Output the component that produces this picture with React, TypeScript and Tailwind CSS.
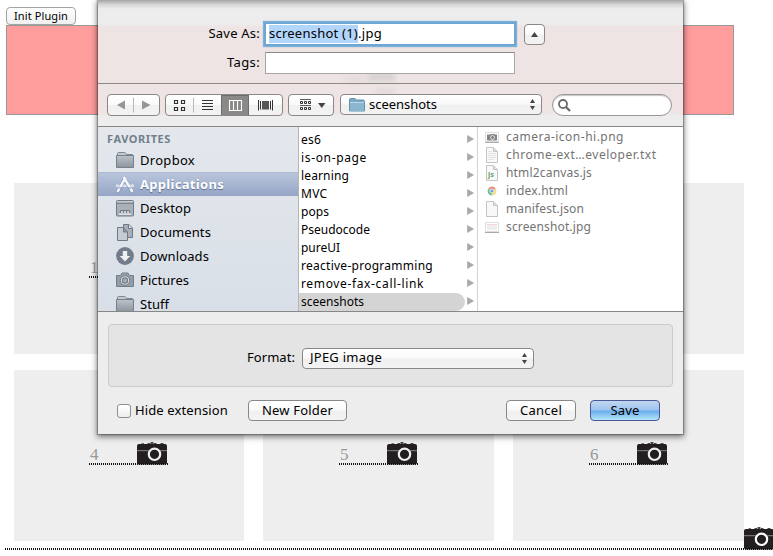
import React, { useLayoutEffect, useRef } from "react";

/** Single line of text, tracked so that it spans exactly `w` pixels. */
function Fit({ children, w, className = "" }: { children: string; w: number; className?: string }) {
  const ref = useRef<HTMLSpanElement>(null);
  useLayoutEffect(() => {
    const el = ref.current;
    if (!el) return;
    el.style.letterSpacing = "0px";
    const natural = el.getBoundingClientRect().width;
    el.style.letterSpacing = `${(w - natural) / children.length}px`;
  }, [children, w]);
  return (
    <span ref={ref} className={`inline-block shrink-0 whitespace-pre ${className}`}>
      {children}
    </span>
  );
}

const dots = "bg-[repeating-linear-gradient(90deg,#111_0_1px,transparent_1px_2px)]";
const control = "border border-[#8b8787] bg-[linear-gradient(#ffffff,#fafafa_48%,#f0f0f0_52%,#f3f3f3)] rounded-[4px]";

function Camera({ hole = "#eeeeee" }: { hole?: string }) {
  return (
    <svg width="30" height="23" viewBox="0 0 30 23" className="block shrink-0">
      <path d="M4.500 1.200H7V3H4.500zM10.500 1H13V3H10.500zM13.500 0H16.500V2H13.500zM17 1H19.500V3H17zM23.500 1H26.500V3H23.500z" fill="#4a4546" />
      <rect x="0" y="2" width="30" height="20.500" rx="2" fill="#231f20" />
      <path d="M0 8.700H30" stroke="#8a8687" strokeWidth="1" />
      <circle cx="17.500" cy="12.300" r="5.700" fill="#231f20" stroke={hole} strokeWidth="2.200" />
    </svg>
  );
}

function Card({ n, className = "" }: { n?: number; className?: string }) {
  return (
    <div className={`flex h-[171px] justify-start bg-[#eeeeee] ${className}`}>
      {n !== undefined && (
        <div className="mt-[72px] h-[23px] w-[79px]">
          <div className="flex h-[21px] justify-between pr-px font-['Liberation_Serif',serif] text-[17px] leading-[26px] text-[#999]">
            <span className="pl-px">{n}</span>
            <Camera />
          </div>
          <div className={`relative h-[2px] ${dots}`} />
        </div>
      )}
    </div>
  );
}

function FolderIcon() {
  return (
    <svg width="18" height="16" viewBox="0 0 18 16">
      <defs>
        <linearGradient id="fold" x1="0" y1="0" x2="0" y2="1">
          <stop offset="0" stopColor="#bec3c9" />
          <stop offset="1" stopColor="#8c949e" />
        </linearGradient>
      </defs>
      <path d="M1.500 3.500V1.500Q1.500.5 2.500.5H8.500Q9.500.5 9.800 1.500L10.200 2.500H16.500V3.500" fill="#c6cad0" stroke="#7c8692" />
      <path d="M.5 3.500H17.500V15.500H.5z" fill="url(#fold)" stroke="#77818d" />
    </svg>
  );
}

function AppsIcon() {
  return (
    <svg width="18" height="18" viewBox="0 0 18 18" fill="none">
      <path d="M0 8.500H4L3.500 11H0zM14 8.500H18V11H14.500zM6 8.500H11L11.700 11H5.500z" fill="#dce3ee" />
      <path d="M1.500 16.500L9 2M7.300.8L16.500 16.500" stroke="#63739a" strokeWidth="3.600" opacity=".45" />
      <path d="M1.500 16L9.500 1.500M7.500.8L16.500 16" stroke="#f5f7fb" strokeWidth="2.500" />
      <path d="M3 12H6M12 12H15" stroke="#7d8db0" />
    </svg>
  );
}

function DesktopIcon() {
  return (
    <svg width="18" height="17" viewBox="0 0 18 17">
      <rect x=".5" y=".5" width="17" height="15.500" rx="1" fill="#aab0b8" stroke="#717b87" />
      <path d="M1 3.500H17" stroke="#7b8590" />
      <path d="M1 1.500H17" stroke="#c5cad0" />
      <path d="M3 14L4.500 10H13.500L15 14z" fill="#707a86" />
      <path d="M3 14H15M5 12H7M8 12H10M11 12H13" stroke="#edf0f4" strokeWidth="1.400" />
    </svg>
  );
}

function DocsIcon() {
  return (
    <svg width="18" height="18" viewBox="0 0 18 18" stroke="#707a86">
      <path d="M7.500 1.500H13L16.500 5V14.500H7.500z" fill="#a8afb8" />
      <path d="M12.500 1.500V5.500H16.500" fill="#d9dee4" />
      <path d="M1.500 4.500H7.500L11.500 9V17.500H1.500z" fill="#c7ccd3" />
      <path d="M7.500 4.500V9H11.500" fill="#8a939e" />
    </svg>
  );
}

function DownIcon() {
  return (
    <svg width="18" height="18" viewBox="0 0 18 18">
      <circle cx="9" cy="9" r="8.900" fill="#737c89" />
      <path d="M6.800 4H11.200V9H14.200L9 14.500L3.800 9H6.800z" fill="#edf0f4" />
    </svg>
  );
}

function PicturesIcon() {
  return (
    <svg width="18" height="16" viewBox="0 0 18 16">
      <path d="M.5 3.500H4.500L6 1H12L13.500 3.500H17.500V14.500H.5z" fill="#949ca6" stroke="#737d89" />
      <circle cx="9" cy="8.500" r="4.700" fill="#dce0e6" stroke="#737d89" />
      <circle cx="9" cy="8.500" r="2.600" fill="#a8b0b9" stroke="#737d89" strokeWidth="1.200" />
    </svg>
  );
}

const favorites = [
  { name: "Dropbox", w: 55, icon: <FolderIcon /> },
  { name: "Applications", w: 84, icon: <AppsIcon />, on: true },
  { name: "Desktop", w: 51, icon: <DesktopIcon /> },
  { name: "Documents", w: 71, icon: <DocsIcon /> },
  { name: "Downloads", w: 69, icon: <DownIcon /> },
  { name: "Pictures", w: 49, icon: <PicturesIcon /> },
  { name: "Stuff", w: 29, icon: <FolderIcon /> },
];

const folders: [string, number][] = [
  ["es6", 20],
  ["is-on-page", 66],
  ["learning", 48],
  ["MVC", 26.5],
  ["pops", 28],
  ["Pseudocode", 69],
  ["pureUI", 39],
  ["reactive-programming", 132],
  ["remove-fax-call-link", 123],
  ["sceenshots", 63],
];

function FileIcon({ kind }: { kind: string }) {
  if (kind === "camera")
    return (
      <svg width="14" height="14" viewBox="0 0 14 14">
        <path d="M.5 2.500H13.500V11.500H.5z" fill="#fff" stroke="#ddd" />
        <path d="M0 12.500H14" stroke="#aaa" />
        <path d="M2 4.500H5L6 4H9.500L10 4.500H12V10.500H2z" fill="#858585" />
        <circle cx="7.500" cy="7.500" r="1.900" fill="#777" stroke="#eee" />
      </svg>
    );
  if (kind === "chrome")
    return (
      <svg width="14" height="14" viewBox="0 0 14 14">
        <path d="M7 7L3.200 4.800A4.400 4.400 0 0 1 10.800 4.800z" fill="#ec8a80" />
        <path d="M7 7V11.400A4.400 4.400 0 0 1 3.200 4.800z" fill="#72c295" />
        <path d="M7 7L10.800 4.800A4.400 4.400 0 0 1 7 11.400z" fill="#f8dc7c" />
        <circle cx="7" cy="7" r="2" fill="#75a5df" stroke="#fff" strokeWidth=".7" />
      </svg>
    );
  if (kind === "image")
    return (
      <svg width="14" height="14" viewBox="0 0 14 14">
        <path d="M.5 2.500H13.500V11.500H.5z" fill="#fff" stroke="#ddd" />
        <path d="M0 12.500H14" stroke="#aaa" />
        <path d="M2 4H12V10H2z" fill="#eeeeee" />
        <path d="M2 4.500H12" stroke="#f3d6d6" />
      </svg>
    );
  return (
    <svg width="14" height="16" viewBox="0 0 14 16">
      <path d="M1.500.5H8.500L12.500 4.500V15.500H1.500z" fill="#f8f8f8" stroke="#c4c4c4" />
      <path d="M8.500.5V4.500H12.500" fill="#ddd" stroke="#c4c4c4" />
      {kind === "text" && <path d="M3 4.500H7M3 6.500H11M3 8.500H11M3 10.500H11M3 12.500H9" stroke="#e4e4e4" />}
      {kind === "js" && (
        <text x="3" y="12" fontSize="7.500" fontWeight="bold" fontFamily="Noto Sans" fill="#6aa57a">
          js
        </text>
      )}
    </svg>
  );
}

const files: [string, number, string][] = [
  ["camera-icon-hi.png", 118, "camera"],
  ["chrome-ext…eveloper.txt", 150.5, "text"],
  ["html2canvas.js", 86, "js"],
  ["index.html", 62, "chrome"],
  ["manifest.json", 78, "blank"],
  ["screenshot.jpg", 85, "image"],
];

function UpDown() {
  return (
    <svg width="5" height="11" viewBox="0 0 5 11" fill="#444">
      <path d="M2.500 0L5 4H0zM2.500 11L5 7H0z" />
    </svg>
  );
}

function Toolbar() {
  return (
    <div className="flex h-[42px] items-start pl-[9px] pt-[10px]">
      <div className={`flex h-[22px] w-[53px] items-center ${control}`}>
        <svg width="51" height="20" viewBox="0 0 51 20">
          <path d="M17 5.500V14.500L9 10zM34 5.500V14.500L42.500 10z" fill="#979494" />
          <path d="M25.500 2.500V17.500" stroke="#bbb7b7" />
        </svg>
      </div>
      <div className={`ml-[5px] flex h-[22px] w-[118px] overflow-hidden ${control}`}>
        <svg width="116" height="20" viewBox="0 0 116 20" fill="none" stroke="#333">
          <path d="M8.500 5.500h3v3h-3zM15.500 5.500h3v3h-3zM8.500 12.500h3v3h-3zM15.500 12.500h3v3h-3z" strokeWidth="1.200" />
          <path d="M27.500 2.500V17.500" stroke="#bbb7b7" />
          <path d="M36 5.500H47M36 8.500H47M36 11.500H47M36 14.500H47" strokeWidth="1.200" />
          <rect x="55" y="0" width="28" height="20" fill="#8b8888" stroke="none" />
          <path d="M55.500 0V20M55 .5H83M82.500 0V20" stroke="#6f6c6c" />
          <path d="M63.500 5.500H75.500V15.500H63.500zM67.500 5.500V15.500M71.500 5.500V15.500" stroke="#fff" strokeWidth="1.100" />
          <path d="M92.500 5V15.500M94.500 6V14.500M104.500 6V14.500M106.500 5V15.500" />
          <rect x="96" y="6" width="7" height="8.500" fill="#555" stroke="none" />
        </svg>
      </div>
      <div className={`ml-[5px] flex h-[22px] w-[46px] ${control}`}>
        <svg width="44" height="20" viewBox="0 0 44 20" fill="none" stroke="#333">
          <path d="M11 4.500H22M11 10.500H22" strokeWidth=".8" />
          <path d="M11.500 6.500h2v2h-2zM15.500 6.500h2v2h-2zM19.500 6.500h2v2h-2zM11.500 12.500h2v2h-2zM15.500 12.500h2v2h-2zM19.500 12.500h2v2h-2z" />
          <path d="M29 8H36.500L32.750 13z" fill="#444" stroke="none" />
        </svg>
      </div>
      <div className={`ml-[6px] flex h-[21px] w-[202px] items-center pl-[8px] pr-[6px] ${control}`}>
        <svg width="16" height="14" viewBox="0 0 16 14">
          <path d="M.5 13V2Q.5.5 2 .5H6L7.500 2H14Q15.500 2 15.500 3.500V13z" fill="#7baac4" stroke="#6593ac" />
          <path d="M1 4.500H15V13H1z" fill="#8ab7cf" />
          <path d="M1 4.500H15" stroke="#b8d8e7" />
        </svg>
        <Fit w={68} className="ml-[4px] mt-[-1px] leading-[18px]">sceenshots</Fit>
        <span className="ml-auto"><UpDown /></span>
      </div>
      <div className="ml-[10px] flex h-[22px] w-[120px] items-center rounded-full border border-[#9b9696] bg-white pl-[5px] shadow-[inset_0_1px_1px_#c8c8c8]">
        <svg width="13" height="13" viewBox="0 0 13 13" fill="none" stroke="#6b6b6b">
          <circle cx="5" cy="5" r="4" strokeWidth="1.800" />
          <path d="M8 8L12 12" strokeWidth="2.300" />
        </svg>
      </div>
    </div>
  );
}

function Dialog() {
  return (
    <div className="absolute left-[98px] top-0 h-[434px] w-[585px] overflow-hidden bg-[linear-gradient(#ededed_24px,#eee4e3_27px,#eee4e3_113px,#ededed_116px)] font-['Noto_Sans','Open_Sans',sans-serif] text-[13px] text-black">
      <div className="absolute left-[246px] top-[74px] h-[10px] w-[22px] bg-[#d8d2d1] opacity-40 blur-[3px]" />
      <div className="absolute left-[270px] top-[68px] h-[14px] w-[27px] bg-[#d2cfce] opacity-70 blur-[2px]" />
      <div className="absolute left-[277px] top-[88px] h-[6px] w-[20px] bg-[#d8d2d1] opacity-50 blur-[2px]" />
      <div className="absolute inset-x-0 top-0 h-[9px] bg-linear-to-b from-[#a5a5a5] via-[#d5d5d5] to-transparent" />
      <div className="relative">
        <div className="h-[84px] border-b border-[#8d8888] pt-[23px]">
          <div className="flex h-[22px] items-center">
            <div className="flex w-[162px] justify-end"><Fit w={51.5}>Save As:</Fit></div>
            <div className="ml-[5px] flex h-[22px] w-[250px] items-center bg-white pl-[4px] shadow-[0_0_0_1px_#6ea6d4,0_0_1px_2px_#7fb0d8,inset_0_0_0_1px_#6ea6d4]">
              <span className="flex h-[18px] items-center bg-[#b2d5fb]"><Fit w={89}>screenshot (1)</Fit></span>
              <Fit w={24}>.jpg</Fit>
            </div>
            <div className={`ml-[9px] flex h-[21px] w-[21px] items-center justify-center ${control}`}>
              <svg width="7" height="5" viewBox="0 0 7 5"><path d="M3.500 0L7 5H0z" fill="#444" /></svg>
            </div>
          </div>
          <div className="mt-[7px] flex h-[22px] items-center">
            <div className="flex w-[162px] justify-end"><Fit w={33}>Tags:</Fit></div>
            <div className="ml-[5px] h-[22px] w-[250px] border border-[#aaa5a5] border-t-[#8d8989] bg-white" />
          </div>
        </div>
        <Toolbar />
        <div className="flex h-[186px] overflow-hidden border-y border-[#878787]">
          <div className="w-[201px] shrink-0 border-r border-[#b5b5b5] bg-linear-to-b from-[#e4e8ed] to-[#d9dfe7]">
            <div className="flex h-[21px] items-center pl-[9px] pt-[3px] text-[11px] font-bold text-[#727f8b]">
              <Fit w={64}>FAVORITES</Fit>
            </div>
            {favorites.map((f) => (
              <div
                key={f.name}
                className={
                  f.on
                    ? "flex h-[24px] items-center border-t border-[#a9b8d3] bg-linear-to-b from-[#b9c5dc] to-[#95a5c5] pl-[18px] font-bold text-white [text-shadow:0_1px_1px_#5c6c8e]"
                    : "flex h-[24px] items-center pl-[18px]"
                }
              >
                {f.icon}
                <Fit w={f.w} className={f.on ? "ml-[6px]" : "ml-[6px] pt-[2px]"}>{f.name}</Fit>
              </div>
            ))}
          </div>
          <div className="w-[179px] shrink-0 border-r border-[#d4d4d4] bg-white pt-[4px] text-[12px]">
            {folders.map(([name, w]) => (
              <div key={name} className="flex h-[18px] items-center justify-between pr-[3px]">
                <div className={name === "sceenshots" ? "flex h-[18px] w-[166px] items-center rounded-r-full bg-[#d4d4d4] pl-[2px]" : "flex h-[18px] w-[166px] items-center pl-[2px]"}>
                  <Fit w={w}>{name}</Fit>
                </div>
                <svg width="7" height="8" viewBox="0 0 7 8" className="mb-[2px]"><path d="M.5.500V7.500L6.500 4z" fill="#aaa" stroke="#999" strokeWidth=".5" /></svg>
              </div>
            ))}
          </div>
          <div className="flex-1 bg-white pl-[7px] pt-px text-[12px] text-[#737373]">
            {files.map(([name, w, kind]) => (
              <div key={name} className="flex h-[18px] items-center">
                <span className="flex h-[16px] w-[14px] items-center"><FileIcon kind={kind} /></span>
                <Fit w={w} className="ml-[7px] leading-[16px]">{name}</Fit>
              </div>
            ))}
          </div>
        </div>
        <div className="h-[122px] px-[10px] pt-[12px]">
          <div className="flex h-[63px] items-center rounded-[4px] border border-[#cbcbcb] bg-[#e4e4e4] pt-[5px]">
            <div className="flex w-[186px] justify-end"><Fit w={48}>Format:</Fit></div>
            <div className={`ml-[7px] flex h-[21px] w-[232px] items-center justify-between pl-[7px] pr-[6px] ${control}`}>
              <Fit w={72}>JPEG image</Fit>
              <UpDown />
            </div>
          </div>
          <div className="mt-[13px] flex h-[21px] items-center">
            <div className="ml-[9px] h-[14px] w-[14px] rounded-[3px] border border-[#8f8f8f] bg-linear-to-b from-white to-[#eee]" />
            <Fit w={93} className="ml-[4px]">Hide extension</Fit>
            <div className={`ml-[20px] flex h-[21px] w-[99px] items-center justify-center ${control}`}><Fit w={71}>New Folder</Fit></div>
            <div className={`ml-[159px] flex h-[21px] w-[70px] items-center justify-center ${control}`}><Fit w={42}>Cancel</Fit></div>
            <div className="ml-[14px] flex h-[21px] w-[70px] items-center justify-center rounded-[4px] border border-[#4d5798] bg-[linear-gradient(#c0d7f0,#9dc4ef_48%,#68aceb_52%,#b4e5fa)]"><Fit w={29}>Save</Fit></div>
          </div>
        </div>
      </div>
    </div>
  );
}

export default function App() {
  return (
    <div className="relative h-[556px] w-[773px] overflow-hidden bg-white">
      <div className="pl-[6px] pt-[7px]">
        <button className="flex h-[18px] w-[70px] items-center justify-center rounded-[4px] border border-[#a3a3a3] bg-linear-to-b from-white to-[#efefef] pb-px font-['Noto_Sans',sans-serif] text-[11px] leading-none">
          <Fit w={54}>Init Plugin</Fit>
        </button>
        <div className="h-[90px] w-[728px] border border-[#999] bg-[#ff9c9c]" />
      </div>
      <div className="mt-[68px] grid grid-cols-[230px_231px_231px] gap-x-[19px] gap-y-[16px] pl-[14px]">
        <Card n={1} className="pl-[75px]" />
        <Card />
        <Card />
        <Card n={4} className="pl-[75px]" />
        <Card n={5} className="pl-[76px]" />
        <Card n={6} className="pl-[76px]" />
      </div>
      <div className="absolute left-[744px] top-[527px]"><Camera hole="#ffffff" /></div>
      <div className={`relative ml-[5px] mt-[7px] h-[2px] ${dots}`} />
      <div className="absolute left-[98px] top-0 h-[434px] w-[585px] shadow-[0_2px_6px_1px_rgba(0,0,0,0.5),0_0_1px_1px_rgba(0,0,0,0.25)]" />
      <Dialog />
    </div>
  );
}
